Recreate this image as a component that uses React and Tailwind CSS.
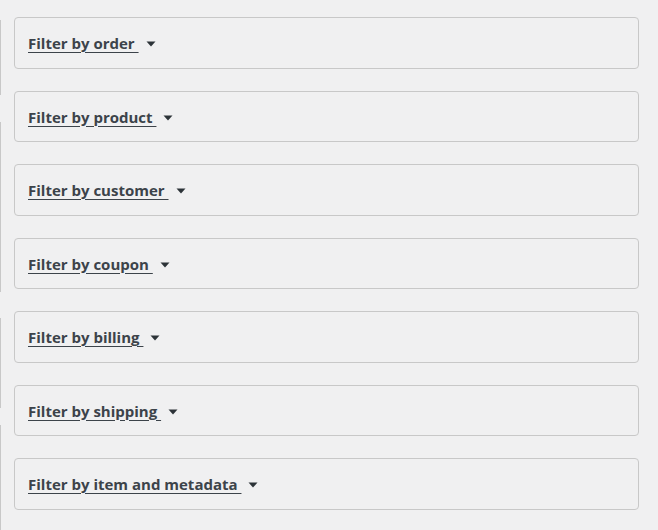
export default function App() {
  const items = [
    "Filter by order",
    "Filter by product",
    "Filter by customer",
    "Filter by coupon",
    "Filter by billing",
    "Filter by shipping",
    "Filter by item and metadata",
  ];
  return (
    <div className="relative w-[658px] h-[530px] overflow-hidden bg-[#f0f0f1]" style={{ fontFamily: '"Open Sans", "Noto Sans", sans-serif' }}>
      <div className="absolute left-0 top-0 flex flex-col">
        <div className="w-px h-[75px] mt-[20px] bg-[#c8c8c8]" />
        <div className="w-px h-[170px] mt-[27px] bg-[#c8c8c8]" />
        <div className="w-px h-[90px] mt-[26px] bg-[#c8c8c8]" />
        <div className="w-px h-[110px] mt-[17px] bg-[#c8c8c8]" />
      </div>
      <div className="flex flex-col gap-[22px] pt-[17px] pl-[14px] w-[639px]">
        {items.map((t) => (
          <div key={t} className="h-[51.5px] border border-[#c8c8c8] rounded-[4px] flex items-center pl-[13px] pt-[1px]">
            <span className="text-[15px] font-bold text-[#3c434a] underline underline-offset-[3px] decoration-[1px]">
              {t + "\u00a0"}
            </span>
            <svg width="10" height="6" viewBox="0 0 10 6" className="ml-[7px] mt-[2px]">
              <path d="M0.5 0.5 L9.5 0.5 L5 5.5 Z" fill="#2c3338" />
            </svg>
          </div>
        ))}
      </div>
    </div>
  );
}
